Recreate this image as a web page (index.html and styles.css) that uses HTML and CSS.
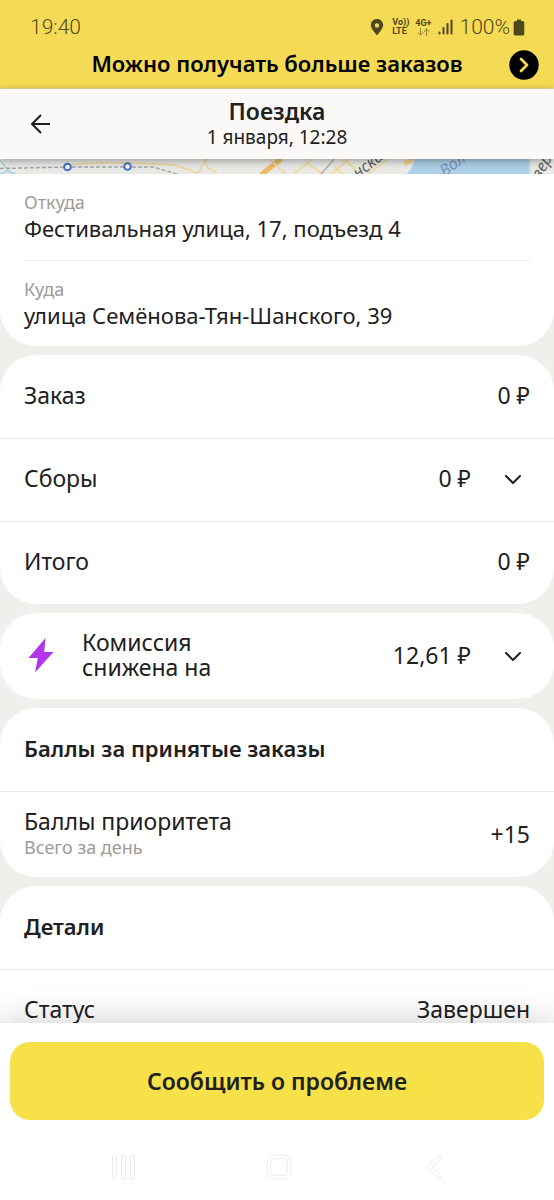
FILE: index.html
```html
<!DOCTYPE html>
<html lang="ru">
<head>
<meta charset="utf-8">
<meta name="viewport" content="width=device-width, initial-scale=1">
<title>Поездка</title>
<link rel="stylesheet" href="styles.css">
</head>
<body>
<div class="app">
  <div class="top">
    <div class="status">
      <span class="clock">19:40</span>
      <div class="status-icons">
        <svg width="14" height="18" viewBox="0 0 14 18"><path fill="currentColor" fill-rule="evenodd" d="M7 1C3.500 1 .8 3.700.8 7c0 4 6.200 10.200 6.200 10.200S13.200 11 13.200 7C13.200 3.700 10.500 1 7 1Zm0 4.200a2.200 2.200 0 1 1 0 4.400 2.200 2.200 0 0 1 0-4.400Z"/></svg>
        <span class="net">Vo))<br>LTE</span>
        <span class="net net-data">4G+
          <svg width="13" height="8" viewBox="0 0 13 8" fill="none" stroke="currentColor" opacity=".6"><path d="M3.500 0v7M.8 4.300l2.700 2.700 2.700-2.700M9.500 8V1M6.800 3.700l2.700-2.700 2.700 2.700"/></svg>
        </span>
        <svg class="signal" width="15" height="16" viewBox="0 0 15 16" fill="none" stroke="currentColor" stroke-width="2" stroke-linecap="round"><path d="M1.500 14.500v-1M5.500 14.500V9M9.500 14.500V5M13.500 14.500v-13"/></svg>
        <span class="battery">100%</span>
        <svg width="12" height="17" viewBox="0 0 12 17"><path fill="currentColor" d="M4 .5h4V2h1.500c1 0 1.800.8 1.800 1.800v10.900c0 1-.8 1.800-1.800 1.800h-7c-1 0-1.800-.8-1.800-1.800V3.800C.7 2.800 1.500 2 2.500 2H4Z"/></svg>
      </div>
    </div>
    <a class="banner" href="#orders">
      <span class="banner-text">Можно получать больше заказов</span>
      <svg width="30" height="30" viewBox="0 0 30 30"><circle cx="15" cy="15" r="14.700" fill="#000"/><path d="m12 9 6 6-6 6" fill="none" stroke="#f5da55" stroke-width="2.800" stroke-linecap="round" stroke-linejoin="round"/></svg>
    </a>
  </div>

  <header class="header">
    <button class="back" aria-label="Назад">
      <svg width="22" height="20" viewBox="0 0 22 20" fill="none" stroke="currentColor" stroke-width="2"><path d="M21 10H3M12 1l-9 9 9 9"/></svg>
    </button>
    <div class="heading">
      <h1 class="title">Поездка</h1>
      <p class="date">1 января, 12:28</p>
    </div>
  </header>

  <main class="content">
    <svg class="map" viewBox="0 0 554 15" preserveAspectRatio="xMidYMid slice">
      <rect width="554" height="15" fill="#e9eae5"/>
      <g fill="none">
        <path d="m0 1 10 13M0 15l7-3 9 3" stroke="#a9cede" stroke-width="1.500"/>
        <path d="M72 6c20-3 55-3 102 0l24 8 7-12 3 7 9 5M203 3l5-3" stroke="#efd7a1" stroke-width="1.500"/>
        <path d="M0 9.500 67 8l86 0 24 7" stroke="#a4a7a8" stroke-width="1.500" stroke-dasharray="4 2"/>
        <path d="m261 16 20-16" stroke="#eeb968" stroke-width="5"/>
        <path d="m269 0 17 15M294 15l18-15M307 4l16 11M331 15l18-15M335 8l8 7M344 0l12 11M368 15l20-15" stroke="#f0dba3" stroke-width="2"/>
        <path d="m321 15 9-10 4-5" stroke="#b1b1b1" stroke-width="1.500"/>
        <path d="m404 5 10-5" stroke="#ecd496" stroke-width="5"/>
      </g>
      <path d="M406 15q5-2 9-15h115v15Z" fill="#acd0e7"/>
      <path d="M530.500 0v15" stroke="#dce7e9" stroke-width="2"/>
      <g fill="#fff" stroke="#4271cc" stroke-width="2"><circle cx="67.500" cy="8" r="3.300"/><circle cx="127.500" cy="7.500" r="3.300"/></g>
      <g class="map-text">
        <text transform="translate(358 20) rotate(-38)" fill="#606060">нская</text>
        <text transform="translate(445 18) rotate(-38)" fill="#7f91bd">Волга</text>
        <text transform="translate(540 21) rotate(-60)" fill="#606060">вер</text>
      </g>
    </svg>

    <section class="card route">
      <div class="stop">
        <span class="caption">Откуда</span>
        <span class="value">Фестивальная улица, 17, подъезд 4</span>
      </div>
      <div class="stop">
        <span class="caption">Куда</span>
        <span class="value">улица Семёнова-Тян-Шанского, 39</span>
      </div>
    </section>

    <section class="card">
      <div class="row"><span class="label">Заказ</span><span>0 ₽</span></div>
      <button class="row">
        <span class="label">Сборы</span><span>0 ₽</span>
        <svg class="chevron" viewBox="0 0 18 10"><path d="m2 1 7 7 7-7"/></svg>
      </button>
      <div class="row"><span class="label">Итого</span><span>0 ₽</span></div>
    </section>

    <section class="card">
      <button class="row commission">
        <svg class="bolt" width="26" height="36" viewBox="0 0 26 36"><defs><linearGradient id="bolt" x1="0" y1="1" x2="1" y2="0"><stop offset="0" stop-color="#a52cf0"/><stop offset=".5" stop-color="#b535ee"/><stop offset="1" stop-color="#9d38d8"/></linearGradient></defs><path fill="url(#bolt)" d="M17.500 1 .5 21h9.300L7 35.500 25.500 15h-9.300Z"/></svg>
        <span class="label">Комиссия<br>снижена на</span><span>12,61 ₽</span>
        <svg class="chevron" viewBox="0 0 18 10"><path d="m2 1 7 7 7-7"/></svg>
      </button>
    </section>

    <section class="card">
      <h2 class="row section-title">Баллы за принятые заказы</h2>
      <div class="row points">
        <span class="label">Баллы приоритета<small class="caption">Всего за день</small></span><span>+15</span>
      </div>
    </section>

    <section class="card">
      <h2 class="row section-title">Детали</h2>
      <div class="row"><span class="label">Статус</span><span>Завершен</span></div>
    </section>
  </main>

  <footer class="footer">
    <button class="report">Сообщить о проблеме</button>
    <nav class="nav">
      <button class="nav-button" aria-label="Недавние"><svg width="26" height="26" viewBox="0 0 26 26"><rect x="1.500" y="1" width="4" height="24" rx="1.500"/><rect x="10.500" y="1" width="4" height="24" rx="1.500"/><rect x="19.500" y="1" width="4" height="24" rx="1.500"/></svg></button>
      <button class="nav-button" aria-label="Домой"><svg width="26" height="26" viewBox="0 0 26 26"><rect x="1" y="1" width="24" height="24" rx="8"/><rect x="4.500" y="4.500" width="17" height="17" rx="5"/></svg></button>
      <button class="nav-button" aria-label="Назад"><svg width="18" height="26" viewBox="0 0 18 26"><path d="M14 1 1.500 13 14 25q3 0 2.500-3L7 13l9.500-9Q17 1 14 1Z"/></svg></button>
    </nav>
  </footer>
</div>
</body>
</html>
```
FILE: styles.css
```css
* { box-sizing: border-box; }

body {
  margin: 0;
  background: #f0efeb;
  color: #21201f;
  font: 22px/26px "Noto Sans", "Open Sans", sans-serif;
}

h1, h2, p { margin: 0; }

button {
  border: 0;
  padding: 0;
  background: none;
  color: inherit;
  font: inherit;
  cursor: pointer;
}

svg { display: block; flex: none; }

.app {
  display: flex;
  flex-direction: column;
  height: 100vh;
}

.top {
  flex: none;
  padding-top: 12px;
  background: #f5da55;
  border-bottom: 1px solid #e9dba0;
}

.status {
  display: flex;
  align-items: center;
  justify-content: space-between;
  height: 30px;
  padding: 0 29px 0 30px;
  color: #50471b;
}

.clock, .battery {
  font: 300 21px/30px Roboto, sans-serif;
}

.status-icons { display: flex; align-items: center; }

.net {
  margin-left: 8px;
  font: 700 9px/9px Roboto, sans-serif;
}

.net-data { margin-left: 6px; }
.net-data svg { margin-left: 2px; }
.signal { margin: 0 7px 0 6px; }
.battery { margin-right: 3px; }

.banner {
  display: grid;
  grid-template-columns: 30px 1fr 30px;
  align-items: center;
  height: 46px;
  padding: 0 15px;
  color: #000;
  font-size: 22px;
  font-weight: 600;
  text-align: center;
  text-decoration: none;
}

.banner-text { grid-column: 2; padding-bottom: 4px; white-space: nowrap; }

.header {
  position: relative;
  z-index: 1;
  display: grid;
  grid-template-columns: 30px 1fr 30px;
  align-items: center;
  flex: none;
  height: 70px;
  padding: 0 25px;
  background: #faf9f7;
  box-shadow: 0 2px 8px rgba(0, 0, 0, .35);
}

.back { display: flex; justify-content: center; padding: 10px 0; }
.heading { text-align: center; }
.title { font-size: 23px; font-weight: 600; line-height: 26px; }
.date { font-size: 19px; line-height: 26px; }

.content {
  display: flex;
  flex-direction: column;
  flex: 1;
  min-height: 0;
  overflow: hidden;
}

.map { width: 100%; height: 15px; }
.map-text { font: italic 16px "Noto Sans", sans-serif; }

.card {
  flex: none;
  margin-bottom: 9px;
  border-radius: 36px;
  background: #fff;
}

.route {
  padding: 0 24px;
  border-radius: 0 0 36px 36px;
}

.stop {
  display: flex;
  flex-direction: column;
  height: 86px;
  padding-top: 15px;
}

.stop + .stop { border-top: 1px solid #ebebea; }

.caption {
  display: block;
  color: #9e9b98;
  font-size: 18px;
  line-height: 26px;
}

.row {
  display: flex;
  align-items: center;
  width: 100%;
  min-height: 83px;
  padding: 0 24px 4px;
  font-size: 23px;
}

.row + .row { border-top: 1px solid #e9e9e8; }
.label { flex: 1; text-align: left; }

.chevron {
  width: 18px;
  height: 10px;
  margin: 4px 8px 0 33px;
  fill: none;
  stroke: #21201f;
  stroke-width: 2;
  stroke-linecap: round;
  stroke-linejoin: round;
}

.commission { min-height: 86px; padding-bottom: 2px; line-height: 25px; }
.bolt { margin: 0 28px 0 4px; }
.points { min-height: 86px; padding-bottom: 2px; }
.section-title { font-size: 22px; font-weight: 600; }

.footer {
  position: relative;
  z-index: 1;
  flex: none;
  padding: 19px 10px 13px;
  background: #fff;
  box-shadow: 0 0 36px rgba(0, 0, 0, .2);
}

.report {
  display: block;
  width: 100%;
  height: 78px;
  border-radius: 20px;
  background: #f6e149;
  font-size: 23px;
  font-weight: 600;
}

.nav {
  display: grid;
  grid-template-columns: repeat(3, 155px);
  justify-content: center;
  padding: 27px 0 0 3px;
}

.nav-button { display: flex; justify-content: center; padding: 7px 0; }
.nav svg { fill: none; stroke: #ebebeb; }
```
